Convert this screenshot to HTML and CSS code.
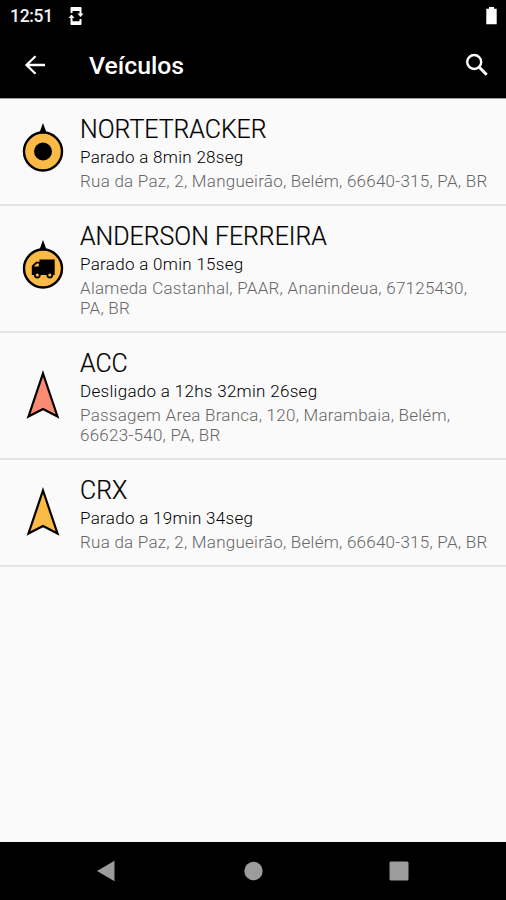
FILE: index.html
```html
<!DOCTYPE html>
<html lang="pt-BR">
<head>
<meta charset="utf-8">
<title>Veículos</title>
<link rel="stylesheet" href="styles.css">
</head>
<body>
<div class="screen">
  <div class="status">
    <span class="clock">12:51</span>
    <svg class="sync" width="16" height="20" viewBox="0 0 16 20"><path d="M3.500 7V2.500h9V9M12.500 13v4.500h-9V11" fill="none" stroke="#fff" stroke-width="2"/><path d="M3 1h10v4H3zM3 15.200h10V19H3z" fill="#fff"/><path d="M9.500 7.500h6L12.500 11zM.500 12h6L3.500 8.500z" fill="#fff"/></svg>
    <svg class="battery" width="12" height="18" viewBox="0 0 12 18"><path d="M3 0h5v1.800h2.700V17.300H.300V1.800H3z" fill="#fff"/></svg>
  </div>
  <header class="appbar">
    <svg class="back" width="22" height="20" viewBox="0 0 22 20"><path d="M21 10H2.500M11.500 1.200L2.500 10l9 8.800" fill="none" stroke="#fff" stroke-width="2.300"/></svg>
    <h1>Veículos</h1>
    <svg class="search" width="24" height="24" viewBox="0 0 24 24"><circle cx="9.200" cy="9" r="7" fill="none" stroke="#fff" stroke-width="2.400"/><path d="M14.500 14.500l7.200 7.200" stroke="#fff" stroke-width="3"/></svg>
  </header>
  <main class="list">
    <article class="row">
      <svg class="marker" width="44" height="58" viewBox="0 0 44 58"><path d="M22 0L26 11h-8z"/><circle cx="22" cy="28.500" r="19" fill="#fbb946" stroke="#000" stroke-width="2.400"/><circle cx="22" cy="28.500" r="9"/></svg>
      <div class="info"><h2>NORTETRACKER</h2><p class="state">Parado a 8min 28seg</p><p class="address">Rua da Paz, 2, Mangueirão, Belém, 66640-315, PA, BR</p></div>
    </article>
    <article class="row">
      <svg class="marker" width="44" height="58" viewBox="0 0 44 58"><path d="M22 0L26 11h-8z"/><circle cx="22" cy="28.500" r="19" fill="#fbb946" stroke="#000" stroke-width="2.400"/><path d="M18.500 19.500h15.200V35H10.800v-9.200l4.200-4h3.500z"/><path d="M12.800 26.500l3-3h2v3z" fill="#fbb946"/><circle cx="16.300" cy="35" r="2.500" fill="#fbb946" stroke="#000" stroke-width="1.800"/><circle cx="28.800" cy="35" r="2.500" fill="#fbb946" stroke="#000" stroke-width="1.800"/></svg>
      <div class="info"><h2>ANDERSON FERREIRA</h2><p class="state">Parado a 0min 15seg</p><p class="address">Alameda Castanhal, PAAR, Ananindeua, 67125430, PA, BR</p></div>
    </article>
    <article class="row">
      <svg class="marker" width="44" height="58" viewBox="0 0 44 58"><path d="M22 6.500l14.500 43L22 42 7.500 49.500z" fill="#fd8a72" stroke="#000" stroke-width="2.200"/></svg>
      <div class="info"><h2>ACC</h2><p class="state">Desligado a 12hs 32min 26seg</p><p class="address">Passagem Area Branca, 120, Marambaia, Belém, 66623-540, PA, BR</p></div>
    </article>
    <article class="row">
      <svg class="marker" width="44" height="58" viewBox="0 0 44 58"><path d="M22 6.500l14.500 43L22 42 7.500 49.500z" fill="#fbb946" stroke="#000" stroke-width="2.200"/></svg>
      <div class="info"><h2>CRX</h2><p class="state">Parado a 19min 34seg</p><p class="address">Rua da Paz, 2, Mangueirão, Belém, 66640-315, PA, BR</p></div>
    </article>
  </main>
  <nav class="navbar">
    <svg width="20" height="22" viewBox="0 0 20 22"><path d="M1 11L18.500 .700v20.600z" fill="#9c9c9c"/></svg>
    <svg width="20" height="22" viewBox="0 0 20 22"><circle cx="10.500" cy="11" r="9.200" fill="#9c9c9c"/></svg>
    <svg width="20" height="22" viewBox="0 0 20 22"><rect x=".500" y="1.500" width="19" height="19" rx="1.500" fill="#9c9c9c"/></svg>
  </nav>
</div>
</body>
</html>
```
FILE: styles.css
```css
* { box-sizing: border-box; margin: 0; padding: 0; }
body { background: #fafafa; font-family: Roboto, "Liberation Sans", sans-serif; color: #000; }
svg { display: block; flex: none; }
.screen { width: 506px; height: 900px; display: flex; flex-direction: column; overflow: hidden; }
.status { height: 32px; background: #000; color: #f2f2f2; display: flex; align-items: center; padding: 0 8px 0 10px; }
.clock { font-size: 17.5px; font-weight: 500; line-height: 20px; width: 58px; letter-spacing: -0.3px; }
.sync { margin-top: -1px; }
.battery { margin-left: auto; margin-top: -1px; }
.appbar { height: 66px; background: #000; color: #fff; display: flex; align-items: center; padding: 0 17px 0 24px; }
.appbar h1 { font-size: 24.8px; font-weight: 500; line-height: 30px; margin: 2px 0 0 43px; }
.back { margin-top: -1px; }
.search { margin-left: auto; margin-top: -1px; }
.list { flex: 1; border-top: 1px solid #a0a0a0; }
.row { display: flex; align-items: center; padding: 15px 0 13px 21px; border-bottom: 2px solid #e4e4e4; }
.marker { margin-top: -2px; }
.info { width: 410px; margin-left: 15px; }
.info h2 { font-size: 24.9px; font-weight: 300; line-height: 32px; -webkit-text-stroke: 0.2px #000; }
.info p { font-size: 17px; font-weight: 300; line-height: 20px; letter-spacing: 0.25px; }
.info .state { margin-top: 1px; letter-spacing: 0.3px; }
.info .address { margin-top: 4px; color: #666; }
.navbar { height: 58px; background: #000; display: flex; align-items: center; justify-content: space-between; padding: 0 97px 0 96px; }
```
